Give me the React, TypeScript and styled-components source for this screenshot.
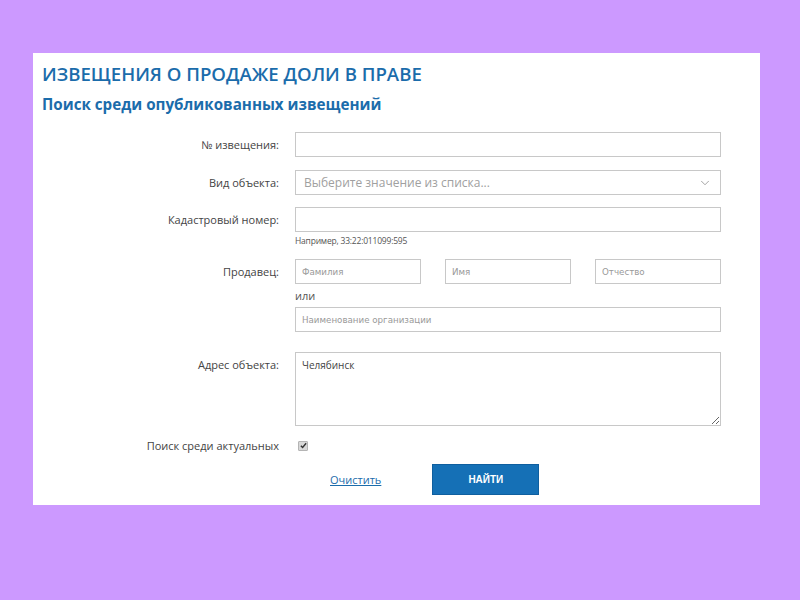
import React, { FC } from "react";
import styled, { createGlobalStyle } from "styled-components";
import { ChevronDown } from "lucide-react";

const colors = {
  lila: "#cc99ff",
  blue: "#1b6cab",
  button: "#1570b6",
  border: "#c8c8c8",
  label: "#444444",
  placeholder: "#a0a0a0",
};

const GlobalStyle = createGlobalStyle`
  html, body {
    margin: 0;
    padding: 0;
    background: ${colors.lila};
    font-family: "Open Sans", "Liberation Sans", sans-serif;
  }
`;

const Page = styled.div`
  width: 800px;
  height: 600px;
  padding: 53px 0 0 33px;
  box-sizing: border-box;
`;

const Panel = styled.div`
  width: 727px;
  height: 452px;
  background: #ffffff;
  box-sizing: border-box;
  padding: 7px 39px 0 9px;
`;

const Title = styled.h1`
  margin: 0;
  font-size: 18.6px;
  font-weight: 600;
  line-height: 28px;
  color: ${colors.blue};
`;

const SubTitle = styled.h2`
  margin: 5px 0 17px;
  font-size: 15.2px;
  font-weight: 700;
  line-height: 22px;
  color: ${colors.blue};
`;

const Form = styled.div`
  display: grid;
  grid-template-columns: 237px 426px;
  column-gap: 16px;
`;

const Label = styled.div<{ gap?: number }>`
  text-align: right;
  font-size: 11px;
  line-height: 25px;
  color: ${colors.label};
  margin-bottom: ${(p) => p.gap ?? 12}px;
`;

const Field = styled.div<{ gap?: number }>`
  display: flex;
  flex-direction: column;
  margin-bottom: ${(p) => p.gap ?? 12}px;
`;

const Input = styled.input<{ small?: boolean }>`
  box-sizing: border-box;
  width: 100%;
  height: 25px;
  border: 1px solid ${colors.border};
  padding: 0 6px;
  font-family: ${(p) =>
    p.small ? '"DejaVu Sans", sans-serif' : '"Open Sans", sans-serif'};
  font-size: ${(p) => (p.small ? "8.7px" : "11px")};
  color: #333;
  outline: none;
  &::placeholder {
    color: #999;
  }
`;

const Select = styled.div`
  box-sizing: border-box;
  height: 25px;
  border: 1px solid ${colors.border};
  padding: 0 8px;
  display: flex;
  align-items: center;
  justify-content: space-between;
  font-size: 12px;
  color: ${colors.placeholder};
`;

const Hint = styled.div`
  margin-top: 3px;
  font-size: 8.5px;
  line-height: 12px;
  color: #555;
  letter-spacing: -0.2px;
`;

const NameRow = styled.div`
  display: grid;
  grid-template-columns: 126px 126px 126px;
  justify-content: space-between;
`;

const Or = styled.div`
  font-size: 11px;
  line-height: 14px;
  color: #555;
  margin: 5px 0 4px;
`;

const TextArea = styled.textarea`
  box-sizing: border-box;
  width: 100%;
  height: 74px;
  border: 1px solid ${colors.border};
  padding: 5px 6px;
  font-family: "Open Sans", sans-serif;
  font-size: 10px;
  color: #444;
  outline: none;
`;

const CheckRow = styled.div`
  height: 25px;
  display: flex;
  align-items: center;
  padding-left: 3px;
`;

const CheckBox = styled.span`
  width: 8px;
  height: 8px;
  background: #d8d8d8;
  border: 1px solid #b4b4b4;
  border-radius: 1px;
  display: flex;
  align-items: center;
  justify-content: center;
`;

const Actions = styled.div`
  display: flex;
  align-items: center;
  padding-left: 35px;
  gap: 51px;
`;

const ClearLink = styled.a`
  font-size: 11px;
  color: ${colors.blue};
  text-decoration: underline;
  cursor: pointer;
`;

const SearchButton = styled.button`
  width: 107px;
  height: 31px;
  border: 1px solid #0f5f9f;
  background: ${colors.button};
  color: #ffffff;
  font-family: "Liberation Sans", Arial, sans-serif;
  font-weight: 700;
  font-size: 10px;
  cursor: pointer;
`;

const App: FC = () => {
  return (
    <>
      <GlobalStyle />
      <Page>
        <Panel>
          <Title>ИЗВЕЩЕНИЯ О ПРОДАЖЕ ДОЛИ В ПРАВЕ</Title>
          <SubTitle>Поиск среди опубликованных извещений</SubTitle>
          <Form>
            <Label gap={13}>№ извещения:</Label>
            <Field gap={13}>
              <Input />
            </Field>

            <Label>Вид объекта:</Label>
            <Field>
              <Select>
                <span>Выберите значение из списка...</span>
                <ChevronDown size={14} strokeWidth={1.3} color="#888" />
              </Select>
            </Field>

            <Label>Кадастровый номер:</Label>
            <Field>
              <Input />
              <Hint>Например, 33:22:011099:595</Hint>
            </Field>

            <Label gap={20}>Продавец:</Label>
            <Field gap={20}>
              <NameRow>
                <Input small placeholder="Фамилия" />
                <Input small placeholder="Имя" />
                <Input small placeholder="Отчество" />
              </NameRow>
              <Or>или</Or>
              <Input small placeholder="Наименование организации" />
            </Field>

            <Label gap={7}>Адрес объекта:</Label>
            <Field gap={7}>
              <TextArea defaultValue="Челябинск" />
            </Field>

            <Label gap={6}>Поиск среди актуальных</Label>
            <Field gap={6}>
              <CheckRow>
                <CheckBox>
                  <svg width="7" height="7" viewBox="0 0 8 8">
                    <path
                      d="M1 4.2 L3 6.3 L7 1.5"
                      fill="none"
                      stroke="#333"
                      strokeWidth="1.6"
                    />
                  </svg>
                </CheckBox>
              </CheckRow>
            </Field>

            <div />
            <Actions>
              <ClearLink>Очистить</ClearLink>
              <SearchButton>НАЙТИ</SearchButton>
            </Actions>
          </Form>
        </Panel>
      </Page>
    </>
  );
};

export default App;
